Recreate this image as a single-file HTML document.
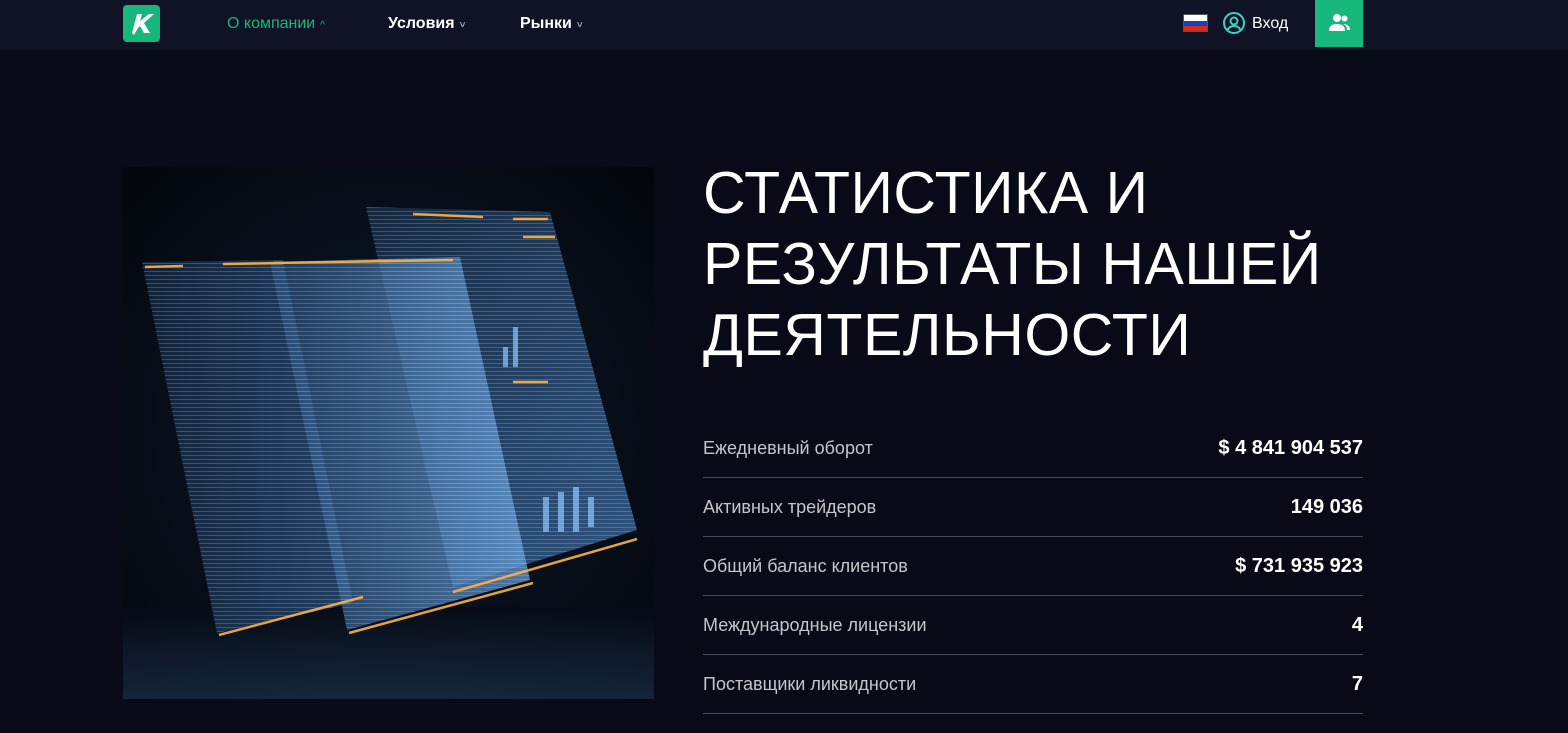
<!DOCTYPE html>
<html><head><meta charset="utf-8"><style>
*{margin:0;padding:0;box-sizing:border-box}
body{width:1568px;height:733px;overflow:hidden;background:#080b17;font-family:"Liberation Sans",sans-serif;position:relative;color:#fff}
.nav{position:absolute;left:0;top:0;width:1568px;height:50px;background:#0f1325}
.logo{position:absolute;left:123px;top:5px;width:37px;height:37px;background:#17b67b;border-radius:4px}
.ni{position:absolute;top:15px;font-size:16px;font-weight:bold;color:#fff}
.ni span{font-size:10px;margin-left:5px;color:#8aa}
.btn{position:absolute;left:1315px;top:0;width:48px;height:47px;background:#17b67b}
h1{position:absolute;left:703px;top:158px;font-weight:normal;font-size:59px;line-height:71px;letter-spacing:0.5px;color:#fff}
.row{position:absolute;left:703px;width:660px;height:59px;border-bottom:1px solid #454a58;font-size:18px}
.row .l{position:absolute;left:0;top:19px;color:#c4c6cc}
.row .r{position:absolute;right:0;top:18px;font-weight:bold;font-size:20px;color:#fff}
</style></head><body>
<div class="nav">
<div class="logo"><svg width="37" height="37" viewBox="0 0 37 37"><path d="M9 28 L14 9 L19 9 L17 16 L26 9 L31 9 L21 18 L27 28 L21 28 L17 21 L15 23 L11 30 Z" fill="#fff"/></svg></div>
<div class="ni" style="left:227px;color:#17b67b;font-weight:normal">О компании<span style="color:#17b67b">^</span></div>
<div class="ni" style="left:388px">Условия<span>˅</span></div>
<div class="ni" style="left:520px">Рынки<span>˅</span></div>
<div style="position:absolute;left:1183px;top:14px;width:25px;height:18px;border:1px solid #555">
<div style="height:6px;background:#fff"></div><div style="height:5px;background:#1c3fb5"></div><div style="height:5px;background:#d52b1e"></div></div>
<svg style="position:absolute;left:1222px;top:11px" width="24" height="24" viewBox="0 0 24 24" fill="none" stroke="#3fd0c8" stroke-width="2"><circle cx="12" cy="12" r="10"/><circle cx="12" cy="10" r="3.5"/><path d="M5.5 19c1.5-3 4-4 6.5-4s5 1 6.5 4"/></svg>
<div class="ni" style="left:1252px;font-weight:normal;font-size:16px">Вход</div>
<div class="btn"><svg style="position:absolute;left:14px;top:13px" width="22" height="20" viewBox="0 0 22 20" fill="#fff"><circle cx="8" cy="5" r="4"/><path d="M0 18c0-5 3-7 8-7s8 2 8 7z"/><circle cx="15.5" cy="5.5" r="3"/><path d="M14 11c4 0 7 2 7 6h-3c0-3-1-5-4-6z"/></svg></div>
</div>

<svg style="position:absolute;left:123px;top:167px" width="531" height="532" viewBox="0 0 531 532">
<defs>
<radialGradient id="bg" cx="0.5" cy="0.5" r="0.7"><stop offset="0" stop-color="#0d1a2c"/><stop offset="1" stop-color="#03060c"/></radialGradient>
<linearGradient id="pb" x1="0" y1="0" x2="1" y2="1"><stop offset="0" stop-color="#1a3350" stop-opacity=".7"/><stop offset="1" stop-color="#3f6fa8" stop-opacity=".75"/></linearGradient>
<linearGradient id="pm" x1="0" y1="0" x2="1" y2="0"><stop offset="0" stop-color="#2e5585" stop-opacity=".6"/><stop offset="1" stop-color="#6ea6e0" stop-opacity=".7"/></linearGradient>
<linearGradient id="pl" x1="0" y1="0" x2="1" y2="0"><stop offset="0" stop-color="#12253e" stop-opacity=".85"/><stop offset="1" stop-color="#2a4e7a" stop-opacity=".75"/></linearGradient>
<pattern id="ln" width="6" height="4" patternUnits="userSpaceOnUse"><rect width="6" height="1" fill="#9fd0ff" opacity=".25"/></pattern>
<linearGradient id="fl" x1="0" y1="0" x2="0" y2="1"><stop offset="0" stop-color="#050a14"/><stop offset="1" stop-color="#1f3858"/></linearGradient>
</defs>
<rect width="531" height="532" fill="url(#bg)"/>
<rect y="440" width="531" height="92" fill="url(#fl)" opacity=".6"/>
<polygon points="243,40 427,45 514,363 330,420" fill="url(#pb)"/>
<polygon points="243,40 427,45 514,363 330,420" fill="url(#ln)"/>
<g fill="#8fc6ff" opacity=".7"><rect x="390" y="160" width="5" height="40"/><rect x="380" y="180" width="5" height="20"/><rect x="420" y="330" width="6" height="35"/><rect x="435" y="325" width="6" height="40"/><rect x="450" y="320" width="6" height="45"/><rect x="465" y="330" width="6" height="30"/></g>
<polygon points="19,95 160,93 230,436 94,466" fill="url(#pl)"/>
<polygon points="19,95 160,93 230,436 94,466" fill="url(#ln)"/>
<polygon points="147,95 337,90 407,413 224,463" fill="url(#pm)"/>
<polygon points="147,95 337,90 407,413 224,463" fill="url(#ln)"/>
<g stroke="#ffb347" stroke-width="2.5" fill="none" opacity=".9">
<line x1="22" y1="100" x2="60" y2="99"/><line x1="100" y1="97" x2="160" y2="96"/><line x1="150" y1="96" x2="330" y2="93"/>
<line x1="290" y1="47" x2="360" y2="50"/><line x1="390" y1="52" x2="425" y2="52"/><line x1="400" y1="70" x2="432" y2="70"/>
<line x1="96" y1="468" x2="240" y2="430"/><line x1="226" y1="466" x2="410" y2="416"/><line x1="330" y1="425" x2="514" y2="372"/>
<line x1="390" y1="215" x2="425" y2="215"/>
</g>
</svg>

<h1>СТАТИСТИКА И<br>РЕЗУЛЬТАТЫ НАШЕЙ<br>ДЕЯТЕЛЬНОСТИ</h1>
<div class="row" style="top:419px"><span class="l">Ежедневный оборот</span><span class="r">$ 4 841 904 537</span></div>
<div class="row" style="top:478px"><span class="l">Активных трейдеров</span><span class="r">149 036</span></div>
<div class="row" style="top:537px"><span class="l">Общий баланс клиентов</span><span class="r">$ 731 935 923</span></div>
<div class="row" style="top:596px"><span class="l">Международные лицензии</span><span class="r">4</span></div>
<div class="row" style="top:655px"><span class="l">Поставщики ликвидности</span><span class="r">7</span></div>
</body></html>
